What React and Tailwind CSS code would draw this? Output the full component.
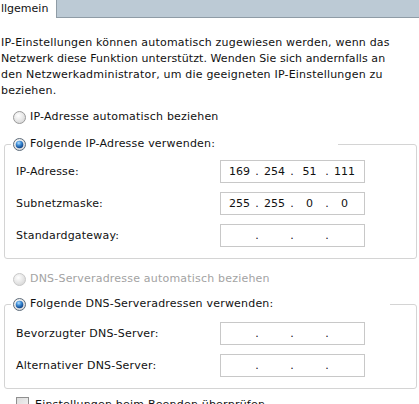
import React from "react";

const font = { fontFamily: '"DejaVu Sans", Tahoma, sans-serif' };

function Radio({ checked, disabled }) {
  return (
    <svg width="13" height="13" viewBox="0 0 13 13" className="shrink-0">
      <defs>
        <radialGradient id="rOff" cx="0.4" cy="0.35" r="0.7">
          <stop offset="0" stopColor="#ffffff" />
          <stop offset="1" stopColor="#d6d6d6" />
        </radialGradient>
        <radialGradient id="rDot" cx="0.4" cy="0.3" r="0.7">
          <stop offset="0" stopColor="#b8e0ff" />
          <stop offset="0.45" stopColor="#3f8fd8" />
          <stop offset="1" stopColor="#0c3f86" />
        </radialGradient>
      </defs>
      <circle cx="6.5" cy="6.5" r="6" fill="url(#rOff)" stroke={disabled ? "#c8c8c8" : checked ? "#5e6c7a" : "#9a9a9a"} />
      {checked && <circle cx="6.5" cy="6.5" r="3.8" fill="url(#rDot)" />}
    </svg>
  );
}

function IpField({ parts }) {
  const p = parts || ["", "", "", ""];
  return (
    <div className="flex items-center w-[145px] h-[23px] border border-[#c8c8c8] bg-white pl-[3px] tracking-normal">
      {p.map((v, i) => (
        <React.Fragment key={i}>
          <span className="w-[31px] text-center">{v}</span>
          {i < 3 && <span className="w-[4px] text-center">.</span>}
        </React.Fragment>
      ))}
    </div>
  );
}

function Row({ label, parts }) {
  return (
    <div className="flex items-center h-[23px]">
      <span className="w-[204px]">{label}</span>
      <IpField parts={parts} />
    </div>
  );
}

export default function App() {
  return (
    <div className="w-[419px] h-[404px] overflow-hidden bg-white text-[11px] leading-[16px] tracking-[0.2px] text-[#111]" style={font}>
      <div className="flex h-[18px]">
        <div className="w-[56px] pt-[1px] pl-[1px] tracking-normal">llgemein</div>
        <div className="flex-1 bg-[#bccad5] border-l border-b border-[#8f9ca6]" />
      </div>

      <p className="mt-[17px] pl-[1px] whitespace-nowrap">
        IP-Einstellungen können automatisch zugewiesen werden, wenn das<br />
        <span className="tracking-[0.08px]">Netzwerk diese Funktion unterstützt. Wenden Sie sich andernfalls an</span><br />
        den Netzwerkadministrator, um die geeigneten IP-Einstellungen zu<br />
        beziehen.
      </p>

      <div className="mt-[10px] h-[16px] flex items-center gap-[4px] pl-[13px]">
        <Radio />
        <span>IP-Adresse automatisch beziehen</span>
      </div>

      <fieldset className="mt-[11px] ml-[4px] w-[413px] border border-[#d4d4d4] rounded-[3px] pl-[11px] pb-[11px]">
        <legend className="-ml-[5px] w-[327px] h-[16px] flex items-center gap-[4px] pl-[2px]">
          <Radio checked />
          <span>Folgende IP-Adresse verwenden:</span>
        </legend>
        <div className="mt-[8px] flex flex-col gap-[9px]">
          <Row label="IP-Adresse:" parts={["169", "254", "51", "111"]} />
          <Row label="Subnetzmaske:" parts={["255", "255", "0", "0"]} />
          <Row label="Standardgateway:" />
        </div>
      </fieldset>

      <div className="mt-[12px] h-[16px] flex items-center gap-[4px] pl-[13px] text-[#a3a3a3]">
        <Radio disabled />
        <span>DNS-Serveradresse automatisch beziehen</span>
      </div>

      <fieldset className="mt-[9px] ml-[4px] w-[413px] border border-[#d4d4d4] rounded-[3px] pl-[11px] pb-[11px]">
        <legend className="-ml-[5px] w-[379px] h-[16px] flex items-center gap-[4px] pl-[2px]">
          <Radio checked />
          <span>Folgende DNS-Serveradressen verwenden:</span>
        </legend>
        <div className="mt-[10px] flex flex-col gap-[9px]">
          <Row label="Bevorzugter DNS-Server:" />
          <Row label="Alternativer DNS-Server:" />
        </div>
      </fieldset>

      <div className="mt-[8px] flex items-start gap-[6px] pl-[16px]">
        <span className="w-[13px] h-[13px] border border-[#8f8f8f] bg-gradient-to-br from-[#dcdcdc] to-[#f4f4f4] shrink-0" />
        <span className="leading-[14px] pt-[1px]">Einstellungen beim Beenden überprüfen</span>
      </div>
    </div>
  );
}
